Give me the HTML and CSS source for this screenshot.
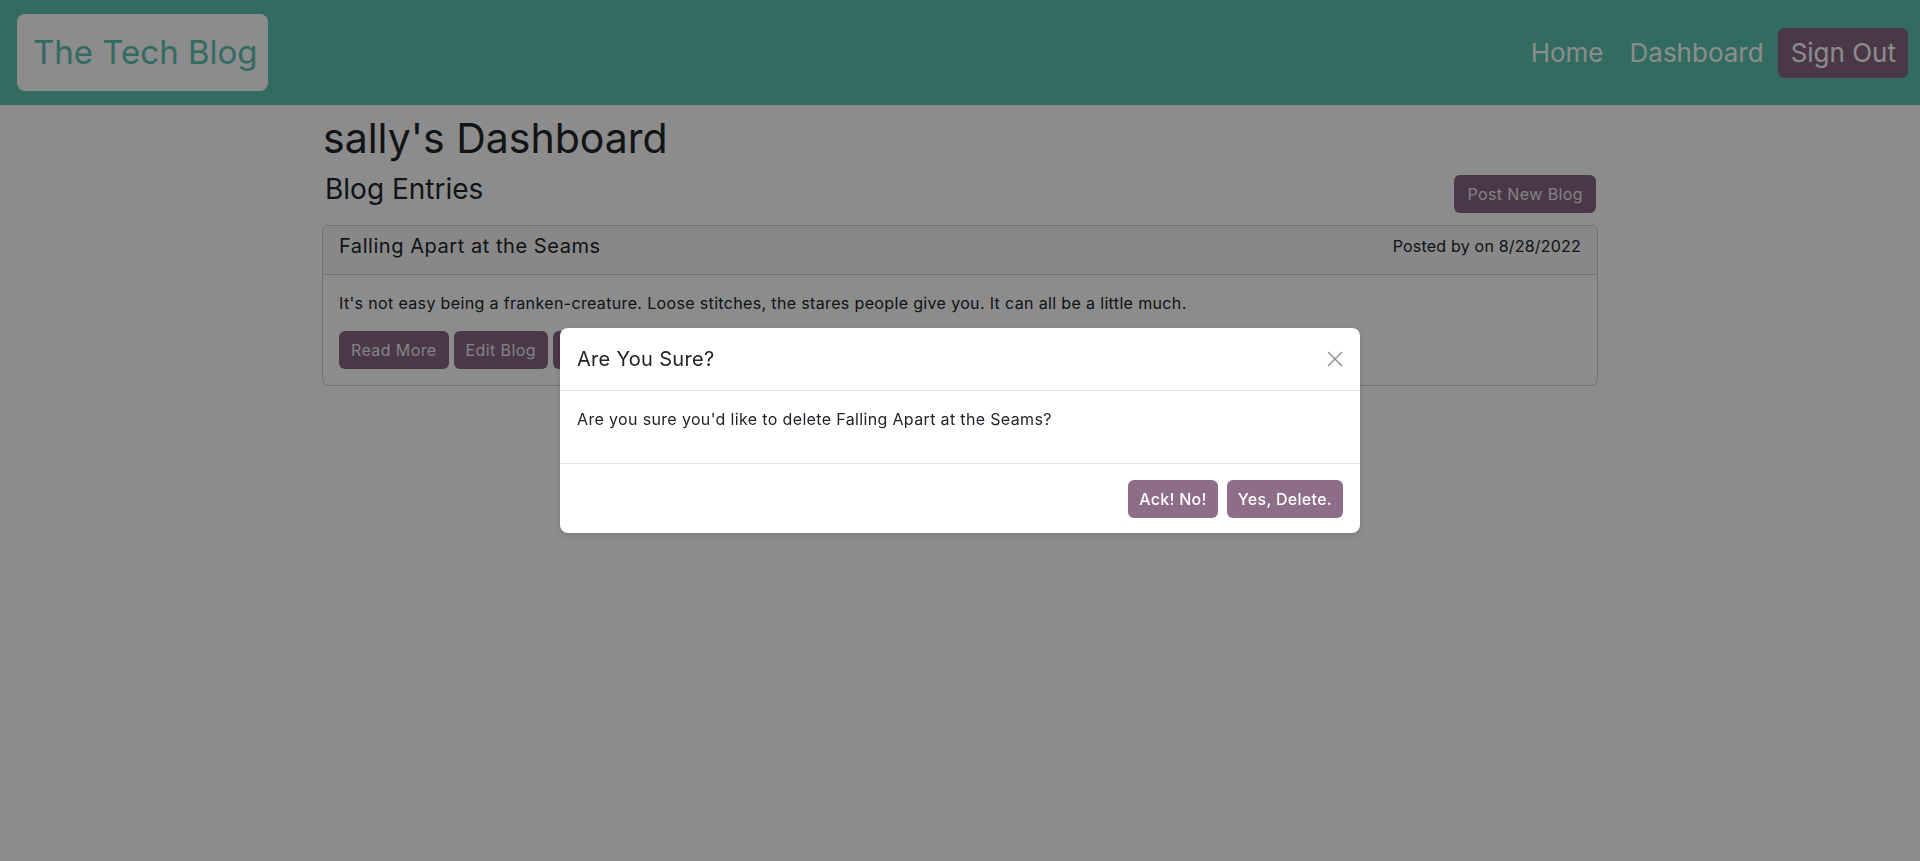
FILE: index.html
```html
<!DOCTYPE html>
<html lang="en">
<head>
<meta charset="utf-8">
<title>The Tech Blog</title>
<link rel="stylesheet" href="styles.css">
</head>
<body>
<header class="navbar">
  <a class="brand" href="#">The Tech Blog</a>
  <nav class="nav">
    <a class="nav-link" href="#">Home</a>
    <a class="nav-link" href="#">Dashboard</a>
    <a class="nav-link nav-signout" href="#">Sign Out</a>
  </nav>
</header>

<main class="container">
  <h1 class="page-title">sally's Dashboard</h1>
  <div class="entries-head">
    <h2 class="entries-title">Blog Entries</h2>
    <button class="btn btn-plum">Post New Blog</button>
  </div>
  <div class="card">
    <div class="card-header">
      <h3 class="card-title">Falling Apart at the Seams</h3>
      <span class="card-meta">Posted by on 8/28/2022</span>
    </div>
    <div class="card-body">
      <p class="card-text">It's not easy being a franken-creature. Loose stitches, the stares people give you. It can all be a little much.</p>
      <div class="card-actions">
        <button class="btn btn-plum">Read More</button>
        <button class="btn btn-plum">Edit Blog</button>
        <button class="btn btn-plum">Delete Blog</button>
      </div>
    </div>
  </div>
</main>

<div class="backdrop"></div>

<div class="modal-wrap">
  <div class="modal">
    <div class="modal-header">
      <h5 class="modal-title">Are You Sure?</h5>
      <button class="btn-close" aria-label="Close">
        <svg width="16" height="16" viewBox="0 0 16 16"><path d="M1 1 L15 15 M15 1 L1 15" stroke="#8a8a8a" stroke-width="1.4" fill="none"/></svg>
      </button>
    </div>
    <div class="modal-body">
      <p>Are you sure you'd like to delete Falling Apart at the Seams?</p>
    </div>
    <div class="modal-footer">
      <button class="btn btn-modal">Ack! No!</button>
      <button class="btn btn-modal">Yes, Delete.</button>
    </div>
  </div>
</div>
</body>
</html>
```

FILE: styles.css
```css
* { box-sizing: border-box; }

html, body {
  margin: 0;
  padding: 0;
  height: 100%;
}

body {
  font-family: Inter, "Open Sans", sans-serif;
  font-size: 16px;
  line-height: 1.5;
  color: #212529;
  background: #ffffff;
  overflow: hidden;
}

a { text-decoration: none; }

.navbar {
  height: 105px;
  background: #5bc3b0;
  display: flex;
  align-items: center;
  justify-content: space-between;
  padding: 0 12px 0 17px;
}

.brand {
  display: block;
  background: #ffffff;
  color: #5bc3b0;
  font-size: 33px;
  line-height: 51px;
  padding: 13px 16px;
  border-radius: 8px;
  width: 251px;
  white-space: nowrap;
}

.nav {
  display: flex;
  align-items: center;
}

.nav-link {
  color: #ffffff;
  font-size: 26px;
  line-height: 40px;
  padding: 5px 13px;
  border-radius: 6px;
}

.nav-signout {
  background: #876683;
  margin-left: 1px;
  padding: 5px 12px 5px 13px;
}

.container {
  width: 1276px;
  margin: 0 auto;
}

.page-title {
  font-weight: 400;
  font-size: 41px;
  line-height: 50px;
  margin: 8px 0 0 1px;
}

.entries-head {
  display: flex;
  justify-content: space-between;
  align-items: flex-end;
  margin-top: 8px;
  margin-bottom: 12px;
}

.entries-title {
  font-weight: 400;
  font-size: 28px;
  line-height: 36px;
  margin: 0 0 6px 3px;
}

.btn {
  font-family: inherit;
  font-size: 16px;
  line-height: 24px;
  padding: 7px 12px;
  border: 0;
  border-radius: 6px;
  color: #ffffff;
  letter-spacing: 0.4px;
  cursor: pointer;
}

.btn-plum {
  background: #876683;
  color: #ededed;
}

.entries-head .btn-plum {
  margin-right: 2px;
  padding: 7px 13px;
}

.card {
  border: 1px solid rgba(0,0,0,0.175);
  border-radius: 6px;
  overflow: hidden;
}

.card-header {
  display: flex;
  justify-content: space-between;
  align-items: center;
  background: rgba(0,0,0,0.03);
  border-bottom: 1px solid rgba(0,0,0,0.175);
  padding: 3px 16px 11px;
  height: 49px;
}

.card-title {
  margin: 0;
  font-weight: 400;
  font-size: 20px;
  line-height: 30px;
  letter-spacing: 0.55px;
}

.card-meta {
  font-size: 16px;
  letter-spacing: 0.2px;
}

.card-body {
  padding: 16px;
}

.card-text {
  margin: 0 0 16px;
  font-size: 16px;
  letter-spacing: 0.35px;
}

.card-actions {
  display: flex;
  gap: 5px;
}

.backdrop {
  position: fixed;
  inset: 0;
  background: rgba(0,0,0,0.45);
}

.modal-wrap {
  position: fixed;
  inset: 0;
  display: flex;
  align-items: center;
  justify-content: center;
}

.modal {
  width: 800px;
  background: #ffffff;
  border-radius: 8px;
  box-shadow: 0 2px 6px rgba(0,0,0,0.15);
}

.modal-header {
  display: flex;
  justify-content: space-between;
  align-items: center;
  padding: 16px 17px 16px 17px;
  border-bottom: 1px solid #dee2e6;
}

.modal-title {
  margin: 0;
  font-weight: 400;
  font-size: 20px;
  line-height: 30px;
  letter-spacing: 0.3px;
}

.btn-close {
  background: none;
  border: 0;
  padding: 0;
  display: flex;
  cursor: pointer;
}

.modal-body {
  padding: 16px 16px 16px 17px;
}

.modal-body p {
  margin: 0 0 16px;
  font-size: 16px;
  letter-spacing: 0.35px;
}

.modal-footer {
  display: flex;
  justify-content: flex-end;
  gap: 9px;
  padding: 16px 17px 15px;
  border-top: 1px solid #dee2e6;
}

.btn-modal {
  background: #8e6d89;
  font-weight: 500;
  padding: 7px 11px;
  letter-spacing: 0.3px;
}
```
